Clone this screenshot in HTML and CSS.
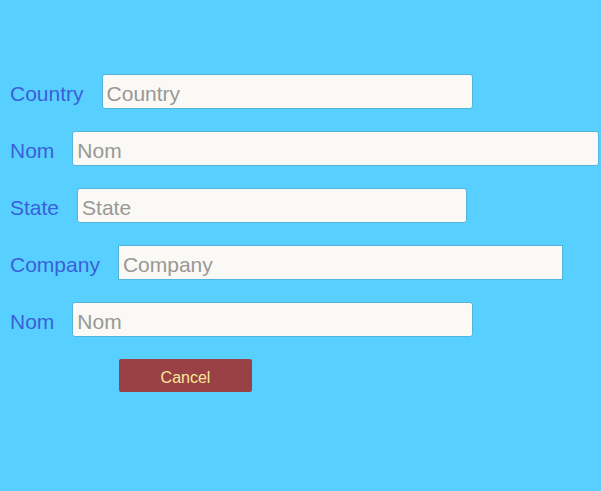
FILE: index.html
```html
<!DOCTYPE html>
<html lang="en">
<head>
<meta charset="utf-8">
<meta name="viewport" content="width=device-width, initial-scale=1">
<title>Form</title>
<link rel="stylesheet" href="styles.css">
</head>
<body>
<form class="form">
  <div class="field field-medium">
    <label for="country">Country</label>
    <input id="country" type="text" placeholder="Country">
  </div>
  <div class="field field-full">
    <label for="nom-1">Nom</label>
    <input id="nom-1" type="text" placeholder="Nom">
  </div>
  <div class="field field-short">
    <label for="state">State</label>
    <input id="state" type="text" placeholder="State">
  </div>
  <div class="field field-long">
    <label for="company">Company</label>
    <input id="company" class="square" type="text" placeholder="Company">
  </div>
  <div class="field field-medium">
    <label for="nom-2">Nom</label>
    <input id="nom-2" type="text" placeholder="Nom">
  </div>
  <button class="cancel" type="button">Cancel</button>
</form>
</body>
</html>
```
FILE: styles.css
```css
* {
  box-sizing: border-box;
}

body {
  margin: 0;
  background: #58d0ff;
  font-family: "Liberation Sans Narrow", "Arial Narrow", "Liberation Sans", sans-serif;
}

.form {
  display: flex;
  flex-direction: column;
  gap: 22px;
  padding: 74px 2px 0 10px;
}

.field {
  display: flex;
  align-items: center;
  gap: 18px;
  font-size: 21px;
  line-height: 31px;
}

.field-short {
  max-width: 457px;
}

.field-medium {
  max-width: 463px;
}

.field-long {
  max-width: 553px;
}

.field label {
  color: #3a5fd9;
  padding-top: 4px;
}

.field input {
  flex: 1;
  min-width: 0;
  height: 35px;
  padding: 4px 4px 0;
  border: 1px solid #52b4dc;
  border-radius: 3px;
  background: #faf9f6;
  color: #444;
  font: inherit;
}

.field input.square {
  border-radius: 0;
}

.field input::placeholder {
  color: #999894;
  opacity: 1;
}

.cancel {
  width: 133px;
  height: 33px;
  margin-left: 109px;
  padding: 4px 0 0;
  border: 0;
  border-radius: 2px;
  background: #9a4145;
  color: #fae79c;
  font-family: inherit;
  font-size: 16px;
}
```
